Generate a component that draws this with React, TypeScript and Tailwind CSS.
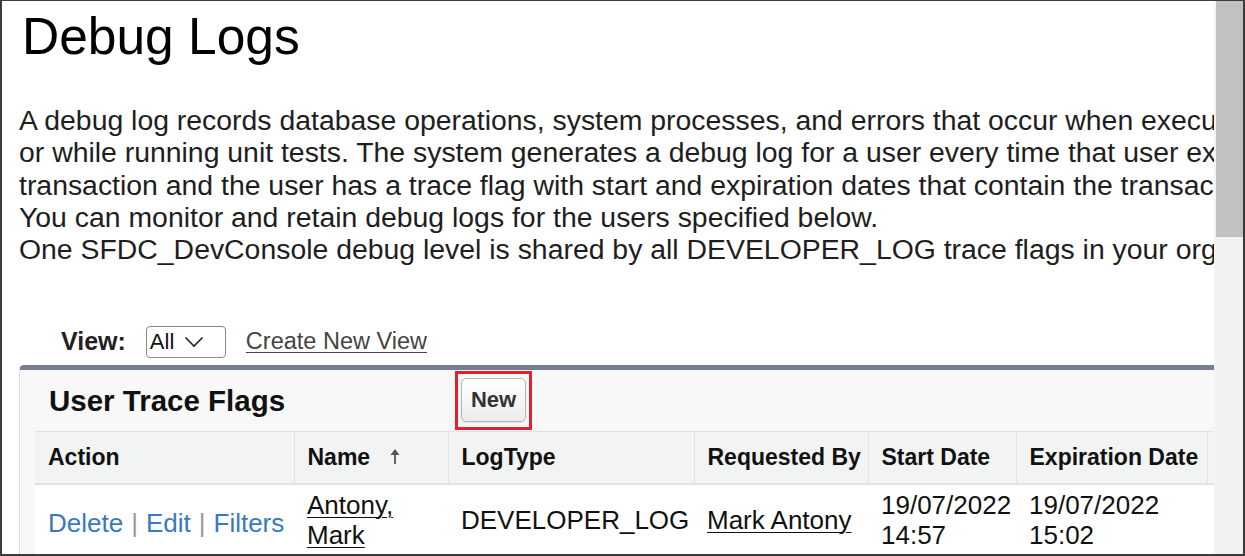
import React from "react";

const F = "font-['Liberation_Sans',Arial,Helvetica,sans-serif]";

function SortArrow() {
  return (
    <svg width="12" height="17" viewBox="0 0 12 17" className="inline-block ml-[19px] -mt-[5px] align-middle">
      <path d="M6 16 L6 5" stroke="#555" strokeWidth="1.8" />
      <path d="M1.5 7 L6 1 L10.5 7 Z" fill="#555" />
    </svg>
  );
}

export default function App() {
  const lines = [
    "A debug log records database operations, system processes, and errors that occur when executing a transaction",
    "or while running unit tests. The system generates a debug log for a user every time that user executes a",
    "transaction and the user has a trace flag with start and expiration dates that contain the transaction's time.",
    "You can monitor and retain debug logs for the users specified below.",
    "One SFDC_DevConsole debug level is shared by all DEVELOPER_LOG trace flags in your org.",
  ];
  const th =
    "text-left align-middle pl-[13px] font-bold text-[23px] text-[#111] border-r border-[#e0e3e5] whitespace-nowrap";
  const td = "align-middle pl-[13px] text-[26px] leading-[30px] text-[#111] py-[5px]";
  return (
    <div className={`${F} w-[1245px] h-[556px] bg-white border-[#3b3b3b] border-l-2 border-r-2 border-t border-b-2 flex overflow-hidden`}>
      <div className="flex-1 overflow-hidden">
        <div className="w-[1500px] pl-[17px]">
          <h1 className="pt-[7px] ml-[3px] text-[51.5px] leading-[56px] text-black font-normal">Debug Logs</h1>
          <div className="mt-[40px] text-[28.4px] leading-[32.25px] text-[#1e1e1e]">
            {lines.map((l, i) => (
              <div key={i} className="whitespace-nowrap">{l}</div>
            ))}
          </div>
          <div className="mt-[60px] h-[33px] flex items-center">
            <span className="ml-[42px] font-bold text-[25px] text-[#222]">View:</span>
            <div className="ml-[20px] w-[80px] h-[32px] border border-[#8a8a8a] rounded-[4px] flex items-center pl-[3px] bg-white">
              <span className="text-[22px] text-[#111]">All</span>
              <svg width="20" height="12" viewBox="0 0 20 12" className="ml-[10px]">
                <polyline points="1.5,1.5 10,10 18.5,1.5" fill="none" stroke="#222" strokeWidth="1.6" />
              </svg>
            </div>
            <span className="ml-[20px] text-[23.5px] text-[#444] underline underline-offset-[3px] decoration-1">Create New View</span>
          </div>
          <div className="mt-[7px] border-t-[5px] border-t-[#767e96] border-l border-l-[#dcdcdc] rounded-tl-[5px] bg-[#f8f8f8] w-[1400px]">
            <div className="h-[61px] flex items-center">
              <div className="w-[441px] pl-[29px] font-bold text-[29.5px] text-[#111]">User Trace Flags</div>
              <div className="relative -mt-[2px]">
                <button className="w-[65px] h-[44px] rounded-[5px] border border-[#b3b3b3] bg-gradient-to-b from-white to-[#ececec] font-bold text-[22px] text-[#333] flex items-center justify-center shadow-[0_1px_1px_rgba(0,0,0,0.08)]">
                  New
                </button>
                <div className="absolute -top-[7px] -bottom-[8px] -left-[6px] -right-[6px] border-[3px] border-[#e3202b]" />
              </div>
            </div>
            <div className="pl-[15px]">
              <table className="table-fixed border-collapse bg-white w-[1360px]">
                <colgroup>
                  <col className="w-[259px]" />
                  <col className="w-[154px]" />
                  <col className="w-[246px]" />
                  <col className="w-[174px]" />
                  <col className="w-[148px]" />
                  <col className="w-[191px]" />
                  <col className="w-[188px]" />
                </colgroup>
                <thead>
                  <tr className="h-[52px] bg-[#f2f3f3] border-t border-[#e0e3e5] border-b-2 border-b-[#e0e3e5]">
                    <th className={th}>Action</th>
                    <th className={th}>
                      Name
                      <SortArrow />
                    </th>
                    <th className={th}>LogType</th>
                    <th className={th}>Requested By</th>
                    <th className={th}>Start Date</th>
                    <th className={`${th} pl-[11px]`}>Expiration Date</th>
                    <th className={th}></th>
                  </tr>
                </thead>
                <tbody>
                  <tr>
                    <td className={`${td} whitespace-nowrap`}>
                      <div className="mt-[6px]">
                        <span className="text-[#3b78c2]">Delete</span>
                        <span className="text-[#9a9a9a] mx-[8px]">|</span>
                        <span className="text-[#3b78c2]">Edit</span>
                        <span className="text-[#9a9a9a] mx-[8px]">|</span>
                        <span className="text-[#3b78c2]">Filters</span>
                      </div>
                    </td>
                    <td className={td}>
                      <div className="underline underline-offset-[3px] decoration-1">Antony,</div>
                      <div className="underline underline-offset-[3px] decoration-1">Mark</div>
                    </td>
                    <td className={`${td} whitespace-nowrap pl-[12px]`}>DEVELOPER_LOG</td>
                    <td className={`${td} whitespace-nowrap pl-[11px]`}>
                      <span className="underline underline-offset-[3px] decoration-1">Mark Antony</span>
                    </td>
                    <td className={td}>
                      <div>19/07/2022</div>
                      <div>14:57</div>
                    </td>
                    <td className={`${td} pl-[12px]`}>
                      <div>19/07/2022</div>
                      <div>15:02</div>
                    </td>
                    <td className={td}></td>
                  </tr>
                </tbody>
              </table>
            </div>
          </div>
        </div>
      </div>
      <div className="w-[29px] h-full flex flex-col border-l-2 border-[#f4f4f4]">
        <div className="h-[236px] bg-[#c1c1c1]" />
        <div className="flex-1 bg-[#f1f1f1]" />
      </div>
    </div>
  );
}
